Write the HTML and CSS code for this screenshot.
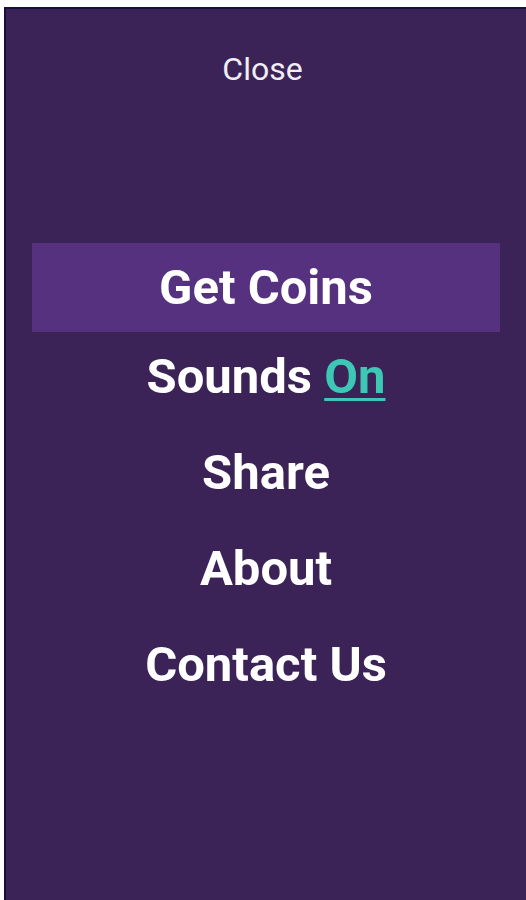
FILE: index.html
```html
<!DOCTYPE html>
<html>
<head>
<meta charset="utf-8">
<link rel="stylesheet" href="styles.css">
</head>
<body>
<div class="frame">
  <div class="close">Close</div>
  <nav class="menu">
    <div class="item active">Get Coins</div>
    <div class="item">Sounds <span class="on">On</span></div>
    <div class="item">Share</div>
    <div class="item">About</div>
    <div class="item">Contact Us</div>
  </nav>
</div>
</body>
</html>
```
FILE: styles.css
```css
html, body {
  margin: 0;
  padding: 0;
  background: #ffffff;
  height: 100%;
  overflow: hidden;
}
.frame {
  margin: 7px 0 0 4px;
  height: 893px;
  box-sizing: border-box;
  border-left: 2px solid #14123d;
  border-top: 2px solid #14123d;
  background: #3b2357;
  font-family: Roboto, "Liberation Sans", sans-serif;
  color: #ffffff;
  display: flex;
  flex-direction: column;
  align-items: center;
}
.close {
  margin-top: 40px;
  padding-right: 7px;
  font-size: 32px;
  line-height: 40px;
  font-weight: 400;
  color: #f2eef6;
}
.menu {
  margin-top: 154px;
  align-self: stretch;
  padding: 0 26px;
  display: flex;
  flex-direction: column;
}
.item {
  text-align: center;
  font-size: 49px;
  font-weight: 700;
  height: 96px;
  line-height: 96px;
}
.item.active {
  background: #56317f;
  height: 89px;
  line-height: 89px;
  margin-bottom: -3px;
}
.on {
  color: #3cc8b4;
  text-decoration: underline;
  text-decoration-thickness: 3px;
  text-underline-offset: 5px;
}
```
